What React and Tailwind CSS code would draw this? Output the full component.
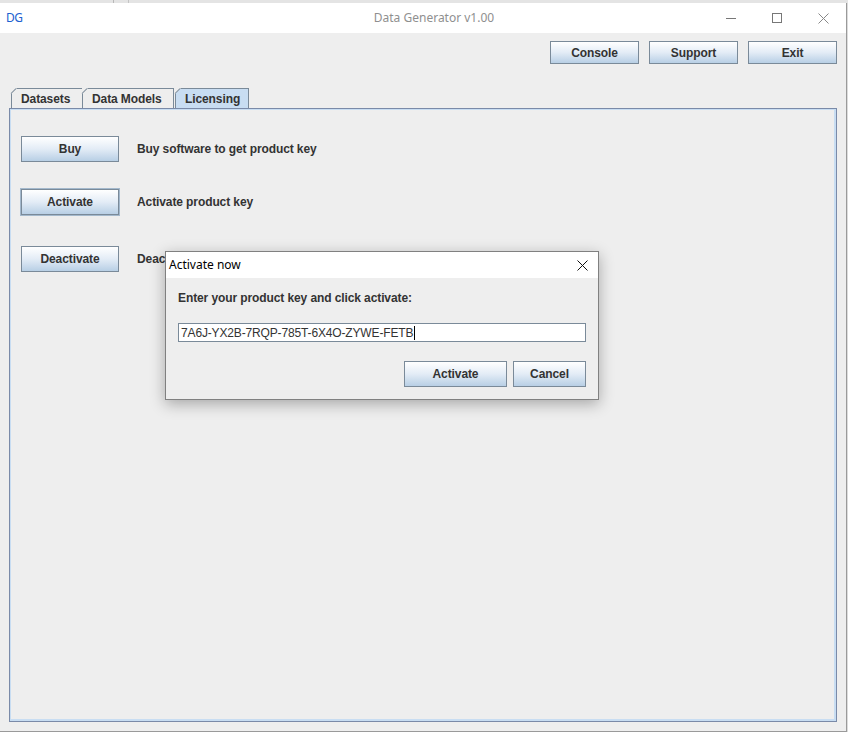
import React from 'react';

const ui = { fontFamily: '"Liberation Sans", Arial, sans-serif' };
const win = { fontFamily: '"Noto Sans", "Open Sans", sans-serif' };

function MetalButton({ children, className = '', focused = false }) {
  return (
    <div
      className={`flex items-center justify-center border border-[#7a8a99] bg-gradient-to-b from-white via-[#e3ecf6] to-[#b8cfe5] text-[12px] font-bold tracking-[-0.1px] text-[#333333] ${
        focused ? 'outline outline-1 outline-[#a3b8cc]' : ''
      } ${className}`}
    >
      {children}
    </div>
  );
}

function Tab({ label, selected, className = '' }) {
  return (
    <div
      className={`relative flex h-[20px] items-center border border-b-0 border-[#7a8a99] px-[9px] text-[12px] font-bold tracking-[-0.1px] text-[#333333] ${
        selected ? 'bg-[#c8ddf2]' : 'bg-[#eeeeee]'
      } ${className}`}
    >
      <span className="absolute -left-px -top-px h-[6px] w-[6px] bg-[#eeeeee] [clip-path:polygon(0_0,100%_0,0_100%)]" />
      <span className="absolute -left-px top-[4px] h-px w-[7px] origin-left -rotate-45 bg-[#7a8a99]" />
      {label}
    </div>
  );
}

function Row({ label, text, focused }) {
  return (
    <div className="flex items-center">
      <MetalButton focused={focused} className="h-[26px] w-[98px]">
        {label}
      </MetalButton>
      <span className="ml-[18px] text-[12px] font-bold tracking-[-0.1px] text-[#333333]">{text}</span>
    </div>
  );
}

export default function App() {
  return (
    <div className="relative h-[732px] w-[848px] overflow-hidden bg-[#dcdcdc]" style={ui}>
      <div className="flex h-[3px] bg-[#e4e4e4]">
        <div className="ml-[113px] h-full w-px bg-[#b8b8b8]" />
        <div className="ml-[14px] h-full w-px bg-[#c4c4c4]" />
      </div>

      <div className="flex h-[729px] w-[847px] flex-col border-b border-r border-[#9a9a9a]">
        {/* title bar */}
        <div className="relative flex h-[30px] items-center bg-white" style={win}>
          <span className="ml-[6px] text-[12px] tracking-[-0.5px] text-[#2060d0]">DG</span>
          <span className="absolute left-[22px] right-0 text-center text-[12px] text-[#8f8f8f]">Data Generator v1.00</span>
          <div className="ml-auto flex h-full items-center">
            <div className="flex w-[46px] justify-center">
              <div className="h-px w-[10px] bg-[#777777]" />
            </div>
            <div className="flex w-[46px] justify-center">
              <div className="h-[10px] w-[10px] border border-[#777777]" />
            </div>
            <div className="flex w-[46px] justify-center">
              <svg width="11" height="11" viewBox="0 0 11 11">
                <path d="M0.5 0.5L10.5 10.5M10.5 0.5L0.5 10.5" stroke="#888888" strokeWidth="1" />
              </svg>
            </div>
          </div>
        </div>

        {/* body */}
        <div className="flex flex-1 flex-col bg-[#eeeeee] pb-[9px] pl-[9px] pr-[9px]">
          <div className="mt-[8px] flex justify-end gap-[10px]">
            <MetalButton className="h-[23px] w-[89px]">Console</MetalButton>
            <MetalButton className="h-[23px] w-[89px]">Support</MetalButton>
            <MetalButton className="h-[23px] w-[89px]">Exit</MetalButton>
          </div>

          <div className="mt-[24px] flex pl-[2px]">
            <Tab label="Datasets" className="w-[72px]" />
            <Tab label="Data Models" className="w-[91px] border-l-0" />
            <Tab label="Licensing" selected className="ml-px w-[74px]" />
          </div>

          <div className="flex flex-1 flex-col border border-[#7a8aa8] shadow-[inset_1px_1px_0_#c8ddf2,inset_-2px_-2px_0_#c8ddf2]">
            <div className="flex flex-col gap-[27px] pl-[11px] pt-[27px]">
              <Row label="Buy" text="Buy software to get product key" />
              <Row label="Activate" text="Activate product key" focused />
              <div className="mt-[4px]">
                <Row label="Deactivate" text="Deactivate product key" />
              </div>
            </div>
          </div>
        </div>
      </div>

      {/* modal dialog */}
      <div className="absolute left-[165px] top-[251px] flex h-[149px] w-[434px] flex-col border border-[#808080] bg-[#eeeeee] shadow-[0_4px_14px_rgba(0,0,0,0.3)]">
        <div className="flex h-[26px] items-center bg-white" style={win}>
          <span className="ml-[3px] text-[12px] text-black">Activate now</span>
          <svg className="ml-auto mr-[10px]" width="11" height="11" viewBox="0 0 11 11">
            <path d="M0.5 0.5L10.5 10.5M10.5 0.5L0.5 10.5" stroke="#111111" strokeWidth="1" />
          </svg>
        </div>
        <div className="flex flex-col pl-[12px] pr-[12px]">
          <span className="mt-[11px] text-[12px] font-bold tracking-[-0.1px] text-[#333333]">Enter your product key and click activate:</span>
          <div className="mt-[16px] flex h-[19px] w-[408px] items-center border border-[#7a8a99] bg-white pl-[2px] text-[12px] tracking-[-0.15px] text-[#333333]">
            7A6J-YX2B-7RQP-785T-6X4O-ZYWE-FETB
            <span className="ml-px h-[14px] w-px bg-black" />
          </div>
          <div className="mt-[19px] flex justify-end gap-[6px]">
            <MetalButton className="h-[26px] w-[103px]">Activate</MetalButton>
            <MetalButton className="h-[26px] w-[73px]">Cancel</MetalButton>
          </div>
        </div>
      </div>
    </div>
  );
}
